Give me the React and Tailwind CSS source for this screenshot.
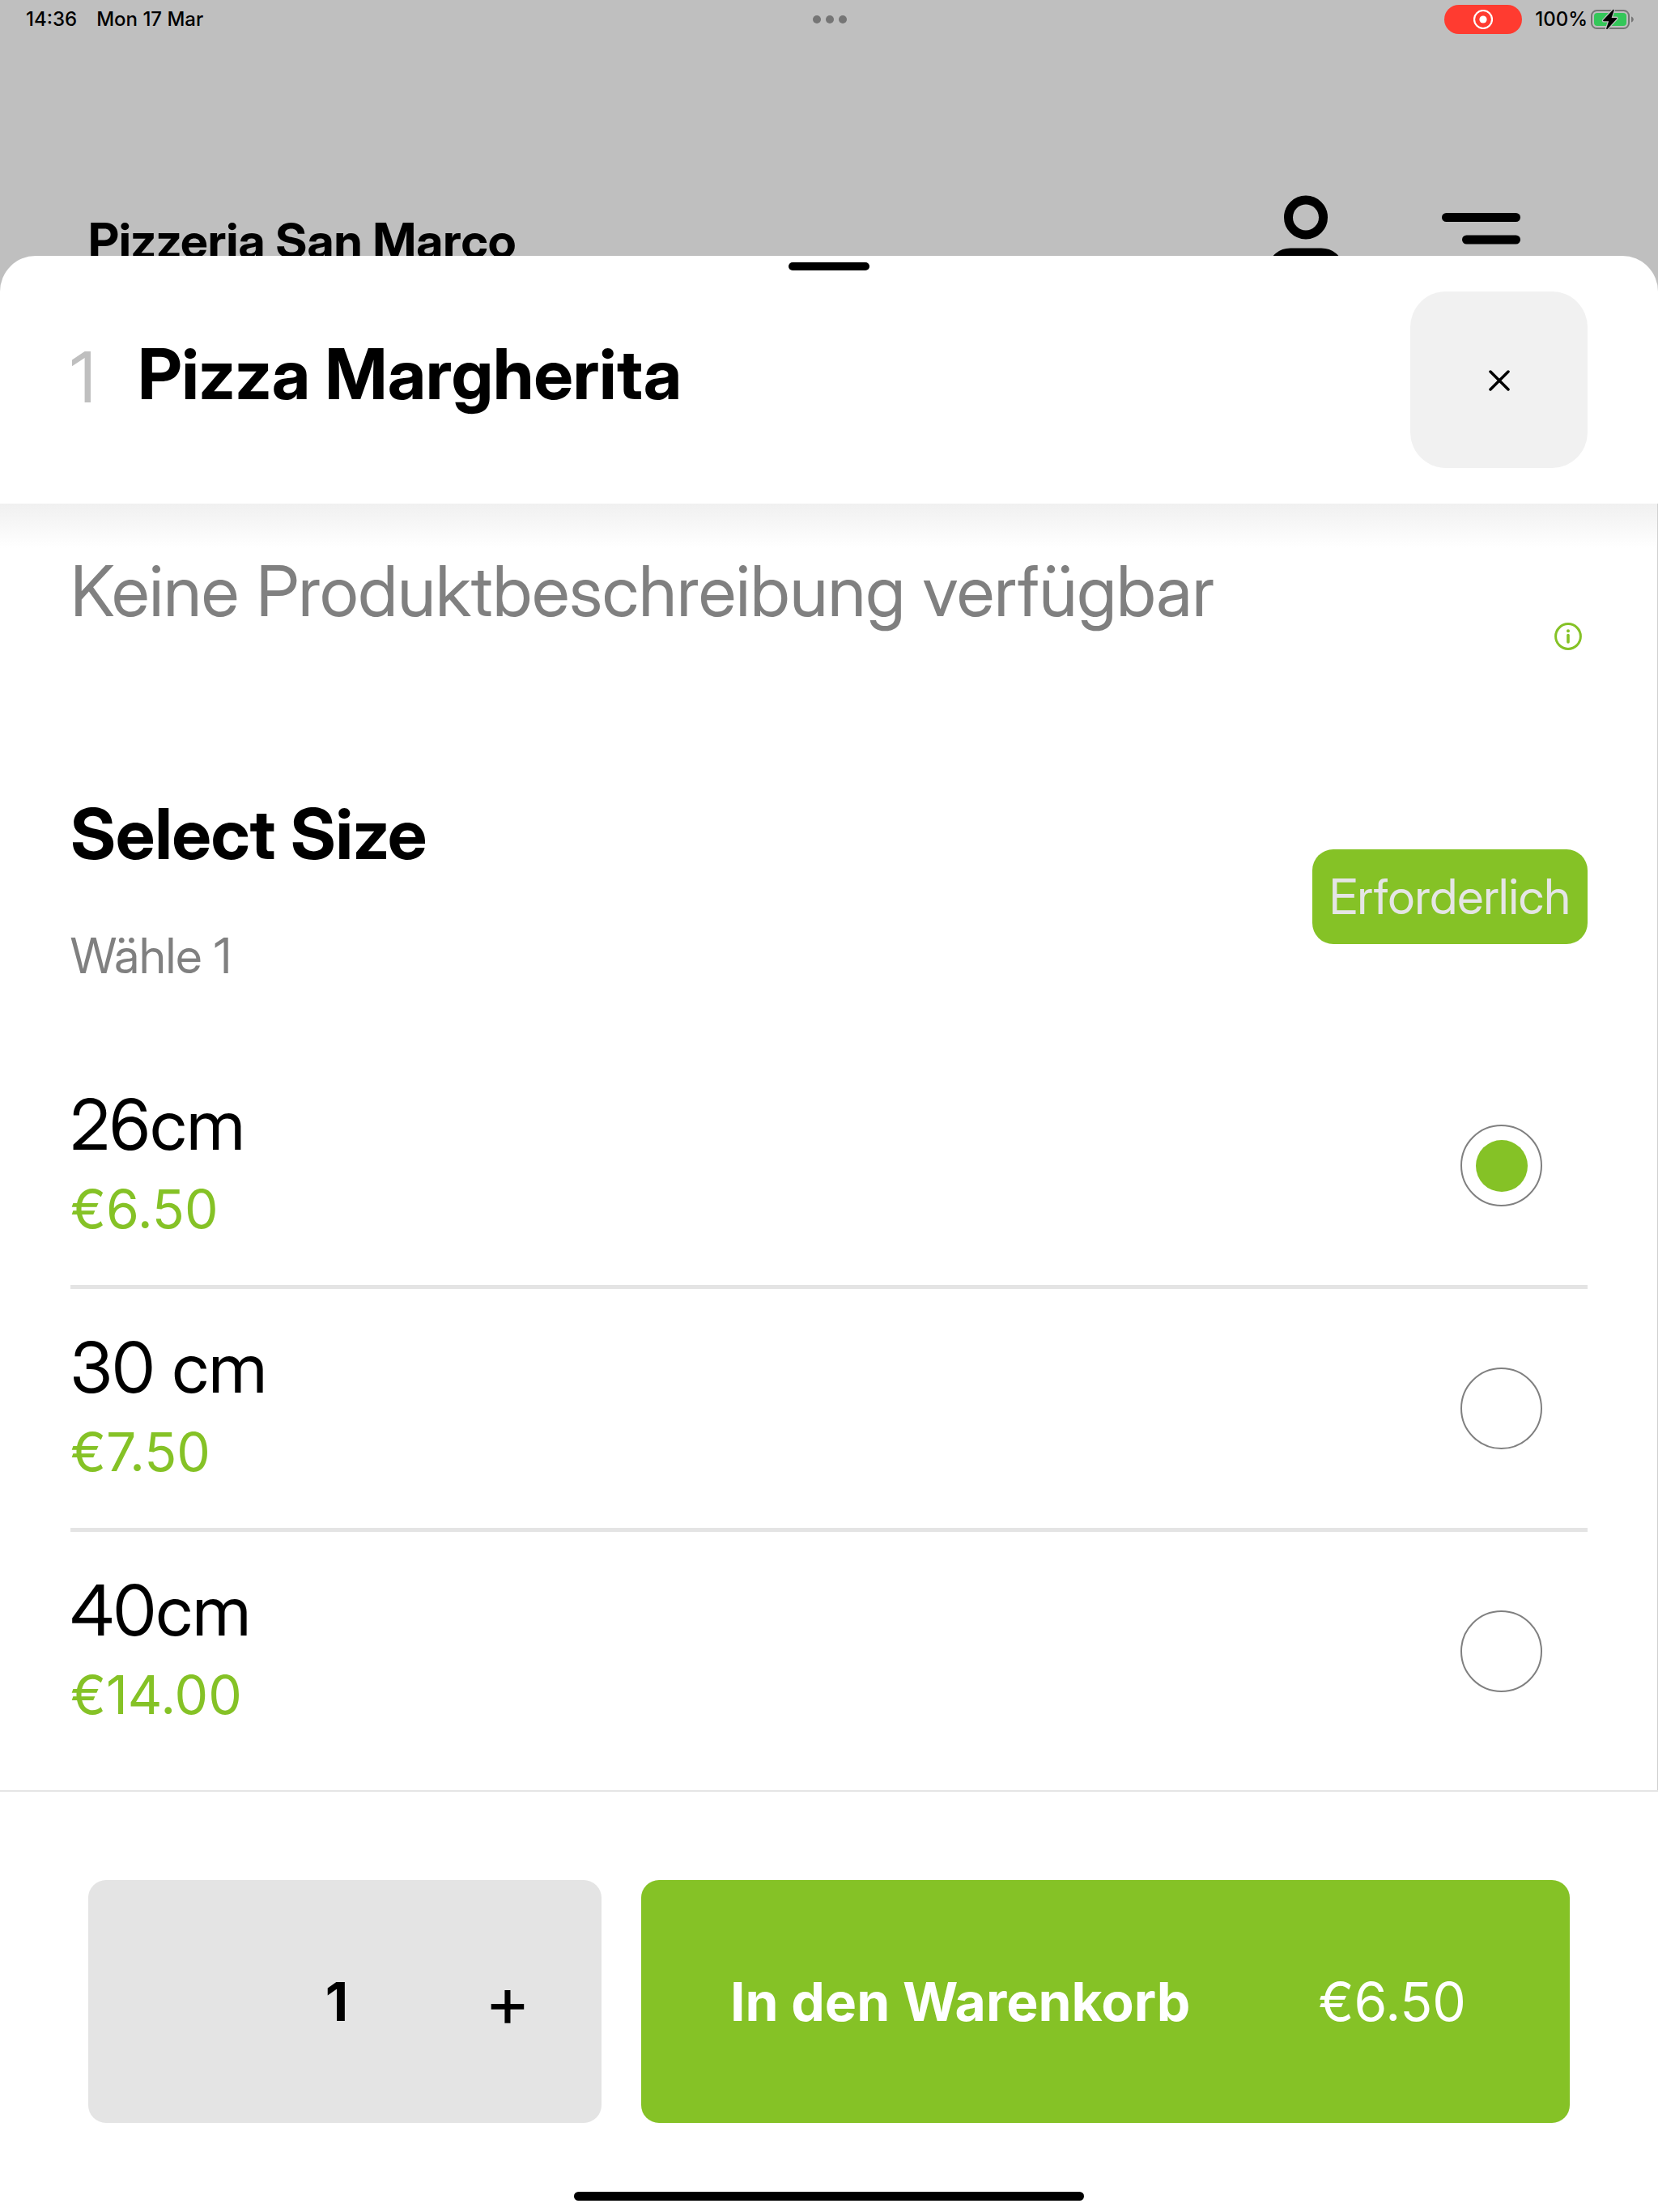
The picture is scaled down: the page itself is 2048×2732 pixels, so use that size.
import { useState } from "react";

const SIZES = [
  { id: "26", label: "26cm", price: "€6.50" },
  { id: "30", label: "30 cm", price: "€7.50" },
  { id: "40", label: "40cm", price: "€14.00" },
];

function StatusBar() {
  return (
    <div className="grid h-12 grid-cols-3 items-center pl-8 pr-[30px] text-2xl leading-12 font-medium">
      <div className="flex gap-6">
        <span>14:36</span>
        <span>Mon 17 Mar</span>
      </div>
      <div className="flex justify-center gap-1.5">
        <span className="size-2.5 rounded-full bg-[#757575]" />
        <span className="size-2.5 rounded-full bg-[#757575]" />
        <span className="size-2.5 rounded-full bg-[#757575]" />
      </div>
      <div className="flex items-center justify-end">
        <span className="mr-4 flex h-9 w-24 items-center justify-center rounded-full bg-[#ff3b30]">
          <svg className="size-6" viewBox="0 0 24 24" fill="none" aria-hidden="true">
            <circle cx="12" cy="12" r="11" stroke="#fff" strokeWidth="2.2" />
            <circle cx="12" cy="12" r="4.6" fill="#fff" />
          </svg>
        </span>
        <span className="mr-1">100%</span>
        <svg className="h-[26px] w-[53px]" viewBox="0 0 53 26" fill="none" aria-hidden="true">
          <rect x="1" y="2" width="46" height="22" rx="6.5" stroke="#757575" strokeWidth="2" />
          <path d="M50 9.500c1.800.6 2.800 2 2.800 3.500S51.800 15.900 50 16.500z" fill="#757575" />
          <rect x="4" y="5" width="40" height="16" rx="4" fill="#34c759" />
          <path
            d="M27.200 1.200 15.400 13.800c-.6.7-.3 1.400.6 1.400h6.200l-3 8.800c-.3 1 .7 1.500 1.400.7L32 12.300c.6-.7.3-1.400-.6-1.400h-5.800l3-9c.3-1-.7-1.500-1.400-.7z"
            fill="#000"
            stroke="#bfbfbf"
            strokeWidth="2.600"
            paintOrder="stroke"
          />
        </svg>
      </div>
    </div>
  );
}

function PageHeader() {
  return (
    <div className="flex h-[268px] items-start justify-between overflow-hidden pl-[109px] pr-[170px] pt-[189px]">
      <div className="pt-[24px] font-['Inter_Display','Inter',sans-serif] text-[60px] leading-[72px] font-bold">
        Pizzeria San Marco
      </div>
      <div className="flex items-start gap-[123px]">
        <button type="button" aria-label="Konto">
          <svg className="h-[120px] w-[90px]" viewBox="0 0 90 120" fill="none" stroke="#000" strokeWidth="11" aria-hidden="true">
            <circle cx="45" cy="31.500" r="21.500" />
            <rect x="5.500" y="75" width="79" height="34" rx="20.500" />
          </svg>
        </button>
        <button type="button" aria-label="Menü" className="pt-[24px]">
          <svg className="h-[44px] w-[97px]" viewBox="0 0 97 44" aria-hidden="true">
            <rect x="0" y="2" width="97" height="11" rx="5.500" />
            <rect x="25" y="29.500" width="72" height="11" rx="5.500" />
          </svg>
        </button>
      </div>
    </div>
  );
}

export default function App() {
  const [size, setSize] = useState("26");
  const [count, setCount] = useState(1);

  return (
    <div className="flex min-h-screen flex-col bg-[#bfbfbf] font-['Inter',sans-serif] text-black">
      <StatusBar />
      <PageHeader />

      <div className="flex flex-1 flex-col overflow-hidden rounded-t-[44px] bg-white font-['Inter_Display','Inter',sans-serif]">
        <header className="relative flex items-start justify-between px-[87px] py-[44px]">
          <span className="absolute left-1/2 top-2 h-2.5 w-[100px] -translate-x-1/2 rounded-full bg-black" />
          <div className="flex items-start gap-[52px] pt-[52px] text-[86px]">
            <span className="leading-[108px] text-[#bfbfbf]">1</span>
            <h1 className="leading-[100px] font-bold">Pizza Margherita</h1>
          </div>
          <button
            type="button"
            aria-label="Schließen"
            className="flex h-[218px] w-[219px] items-center justify-center rounded-[44px] bg-[#f1f1f1]"
          >
            <svg className="size-7" viewBox="0 0 28 28" stroke="#000" strokeWidth="3.500" strokeLinecap="round" aria-hidden="true">
              <path d="M3 4l22 22M25 4L3 26" />
            </svg>
          </button>
        </header>

        <main className="flex-1 border-r border-[#d0d0d0] bg-linear-to-b from-[#f0f0f0] to-white to-[55px] pb-[19px] pl-[87px] pr-[86px] pt-[58px]">
          <div className="flex h-[130px] items-end justify-between">
            <p className="self-start text-[86px] leading-[100px] text-[#808080]">Keine Produktbeschreibung verfügbar</p>
            <button type="button" aria-label="Produktinformationen" className="flex size-12 items-center justify-center">
              <svg className="size-[34px]" viewBox="0 0 34 34" fill="none" stroke="#85c226" aria-hidden="true">
                <circle cx="17" cy="17" r="15.400" strokeWidth="3" />
                <path d="M17 15.500v8.500" strokeWidth="3.600" strokeLinecap="round" />
                <circle cx="17" cy="10.300" r="2" fill="#85c226" stroke="none" />
              </svg>
            </button>
          </div>

          <div className="mt-[170px] flex items-center justify-between">
            <div className="pb-[19px]">
              <h2 id="size-title" className="text-[86px] leading-[100px] font-bold">Select Size</h2>
              <p className="mt-16 text-[60px] leading-[72px] text-[#808080]">Wähle 1</p>
            </div>
            <span className="rounded-[26px] bg-[#85c226] px-[21px] text-[60px] leading-[117px] text-[#e5e5e5]">
              Erforderlich
            </span>
          </div>

          <div role="radiogroup" aria-labelledby="size-title" className="mt-[57px]">
            {SIZES.map((s) => (
              <label
                key={s.id}
                className="flex h-[300px] items-center justify-between border-b-[5px] border-[#e4e4e4] pr-[56px] last:border-transparent"
              >
                <span className="flex flex-col gap-2.5">
                  <span className="text-[86px] leading-[96px]">{s.label}</span>
                  <span className="font-['Inter',sans-serif] text-[66px] leading-[92px] text-[#85c226]">{s.price}</span>
                </span>
                <input
                  type="radio"
                  name="size"
                  value={s.id}
                  checked={size === s.id}
                  onChange={() => setSize(s.id)}
                  className="grid size-[101px] appearance-none place-items-center rounded-full border-2 border-[#808080] before:size-16 before:rounded-full checked:before:bg-[#85c226]"
                />
              </label>
            ))}
          </div>
        </main>

        <footer className="border-t-2 border-[#e5e5e5] px-[109px] pb-[14px] pt-[109px] font-['Inter',sans-serif]">
          <div className="grid grid-cols-[634fr_1147fr] gap-[49px]">
            <div className="grid h-[300px] grid-cols-[202fr_210fr_212fr] items-center rounded-[22px] bg-[#e4e4e4] pr-2.5 text-center">
              <button
                type="button"
                aria-label="Menge verringern"
                disabled={count === 1}
                onClick={() => setCount(count - 1)}
                className="text-[86px] leading-[80px]"
              >
                {count > 1 ? "−" : ""}
              </button>
              <output className="text-[66px] leading-[80px] font-bold">{count}</output>
              <button
                type="button"
                aria-label="Menge erhöhen"
                onClick={() => setCount(count + 1)}
                className="text-[86px] leading-[80px]"
              >
                +
              </button>
            </div>
            <button
              type="button"
              className="flex h-[300px] items-center justify-between rounded-[22px] bg-[#85c226] pl-[110px] pr-[128px] text-[66px] leading-[80px] text-white"
            >
              <span className="font-bold">In den Warenkorb</span>
              <span>{SIZES.find((s) => s.id === size).price}</span>
            </button>
          </div>
          <div className="mx-auto mt-[85px] h-[11px] w-[630px] rounded-full bg-black" />
        </footer>
      </div>
    </div>
  );
}
